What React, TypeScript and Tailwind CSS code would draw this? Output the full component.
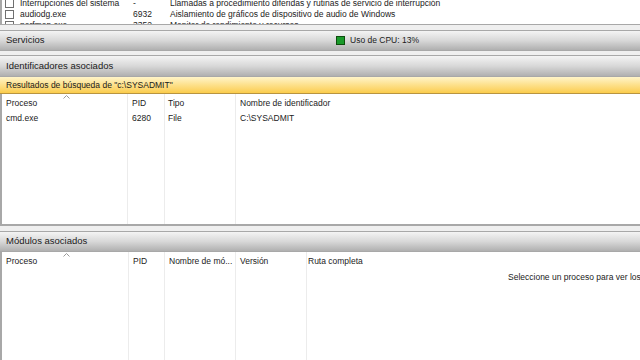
const font = { fontFamily: '"Liberation Sans", Arial, sans-serif' };

function SectionHeader({ title, tall, children }: { title: string; tall?: boolean; children?: React.ReactNode }) {
  return (
    <div
      className={`flex shrink-0 items-center border-y border-[#a8a8a8] bg-gradient-to-b from-[#f4f4f4] via-[#d8d8d8] to-[#b0b0b0] pl-[6px] text-[9.5px] text-[#1a1a1a] ${
        tall ? "h-[22px]" : "h-[21px]"
      }`}
    >
      <span className="w-[330px]">{title}</span>
      {children}
    </div>
  );
}

function SortArrow() {
  return (
    <svg width="7" height="4" viewBox="0 0 7 4" className="absolute left-[61px] top-[1px]">
      <path d="M0.5 3.5L3.5 0.5L6.5 3.5" fill="none" stroke="#9a9a9a" strokeWidth="1" />
    </svg>
  );
}

const topRows = [
  { name: "Interrupciones del sistema", pid: "-", desc: "Llamadas a procedimiento diferidas y rutinas de servicio de interrupción" },
  { name: "audiodg.exe", pid: "6932", desc: "Aislamiento de gráficos de dispositivo de audio de Windows" },
  { name: "perfmon.exe", pid: "3352", desc: "Monitor de rendimiento y recursos" },
];

export default function App() {
  return (
    <div className="flex h-[360px] w-[640px] flex-col overflow-hidden bg-white text-[8.5px] text-[#222]" style={font}>
      {/* process list, scrolled so the first row is cut */}
      <div className="h-[25px] shrink-0 overflow-hidden border-b border-l-2 border-[#a8a8a8] bg-white">
        <div className="-mt-[2px] flex flex-col">
          {topRows.map((r) => (
            <div key={r.name} className="flex h-[11px] items-center">
              <span className="ml-[3px] h-[9px] w-[9px] border border-[#707070] bg-white" />
              <span className="ml-[6px] w-[113px]">{r.name}</span>
              <span className="w-[37px]">{r.pid}</span>
              <span>{r.desc}</span>
            </div>
          ))}
        </div>
      </div>
      <div className="h-[5px] shrink-0 bg-[#efefef]" />
      <SectionHeader title="Servicios">
        <span className="mr-[5px] h-[9px] w-[9px] border border-[#0d4d0d] bg-[#1a9a2a]" />
        <span className="text-[8.5px]">Uso de CPU: 13%</span>
      </SectionHeader>
      <div className="h-[4px] shrink-0 bg-[#efefef]" />
      <SectionHeader title="Identificadores asociados" tall />
      <div className="flex h-[17px] shrink-0 items-center border-b border-[#b89440] bg-gradient-to-b from-[#fff4c8] via-[#fde08a] to-[#fbcc4a] pl-[6px] text-[#1a1a1a]">
        Resultados de búsqueda de "c:\SYSADMIT"
      </div>
      <div className="flex h-[132px] shrink-0 border-b-2 border-l-2 border-[#a8a8a8] bg-white">
        <div className="relative w-[126px] shrink-0 border-r border-[#ececec] pl-[4px]">
          <SortArrow />
          <div className="flex h-[16px] items-end">Proceso</div>
          <div className="flex h-[16px] items-center">cmd.exe</div>
        </div>
        <div className="w-[37px] shrink-0 border-r border-[#ececec] pl-[4px]">
          <div className="flex h-[16px] items-end">PID</div>
          <div className="flex h-[16px] items-center">6280</div>
        </div>
        <div className="w-[71px] shrink-0 border-r border-[#ececec] pl-[3px]">
          <div className="flex h-[16px] items-end">Tipo</div>
          <div className="flex h-[16px] items-center">File</div>
        </div>
        <div className="flex-1 pl-[4px]">
          <div className="flex h-[16px] items-end">Nombre de identificador</div>
          <div className="flex h-[16px] items-center">C:\SYSADMIT</div>
        </div>
      </div>
      <div className="h-[5px] shrink-0 bg-[#efefef]" />
      <SectionHeader title="Módulos asociados" />
      <div className="flex min-h-0 flex-1 border-l-2 border-[#a8a8a8] bg-white">
        <div className="relative w-[127px] shrink-0 border-r border-[#ececec] pl-[4px]">
          <SortArrow />
          <div className="flex h-[16px] items-end">Proceso</div>
        </div>
        <div className="w-[36px] shrink-0 border-r border-[#ececec] pl-[4px]">
          <div className="flex h-[16px] items-end">PID</div>
        </div>
        <div className="w-[71px] shrink-0 border-r border-[#ececec] pl-[4px]">
          <div className="flex h-[16px] items-end whitespace-nowrap">Nombre de mó...</div>
        </div>
        <div className="w-[71px] shrink-0 border-r border-[#ececec] pl-[4px]">
          <div className="flex h-[16px] items-end">Versión</div>
        </div>
        <div className="min-w-0 flex-1 overflow-hidden pl-[1px]">
          <div className="flex h-[16px] items-end">Ruta completa</div>
          <div className="mt-[3px] whitespace-nowrap pl-[200px]">Seleccione un proceso para ver los módulos asociados</div>
        </div>
      </div>
    </div>
  );
}
